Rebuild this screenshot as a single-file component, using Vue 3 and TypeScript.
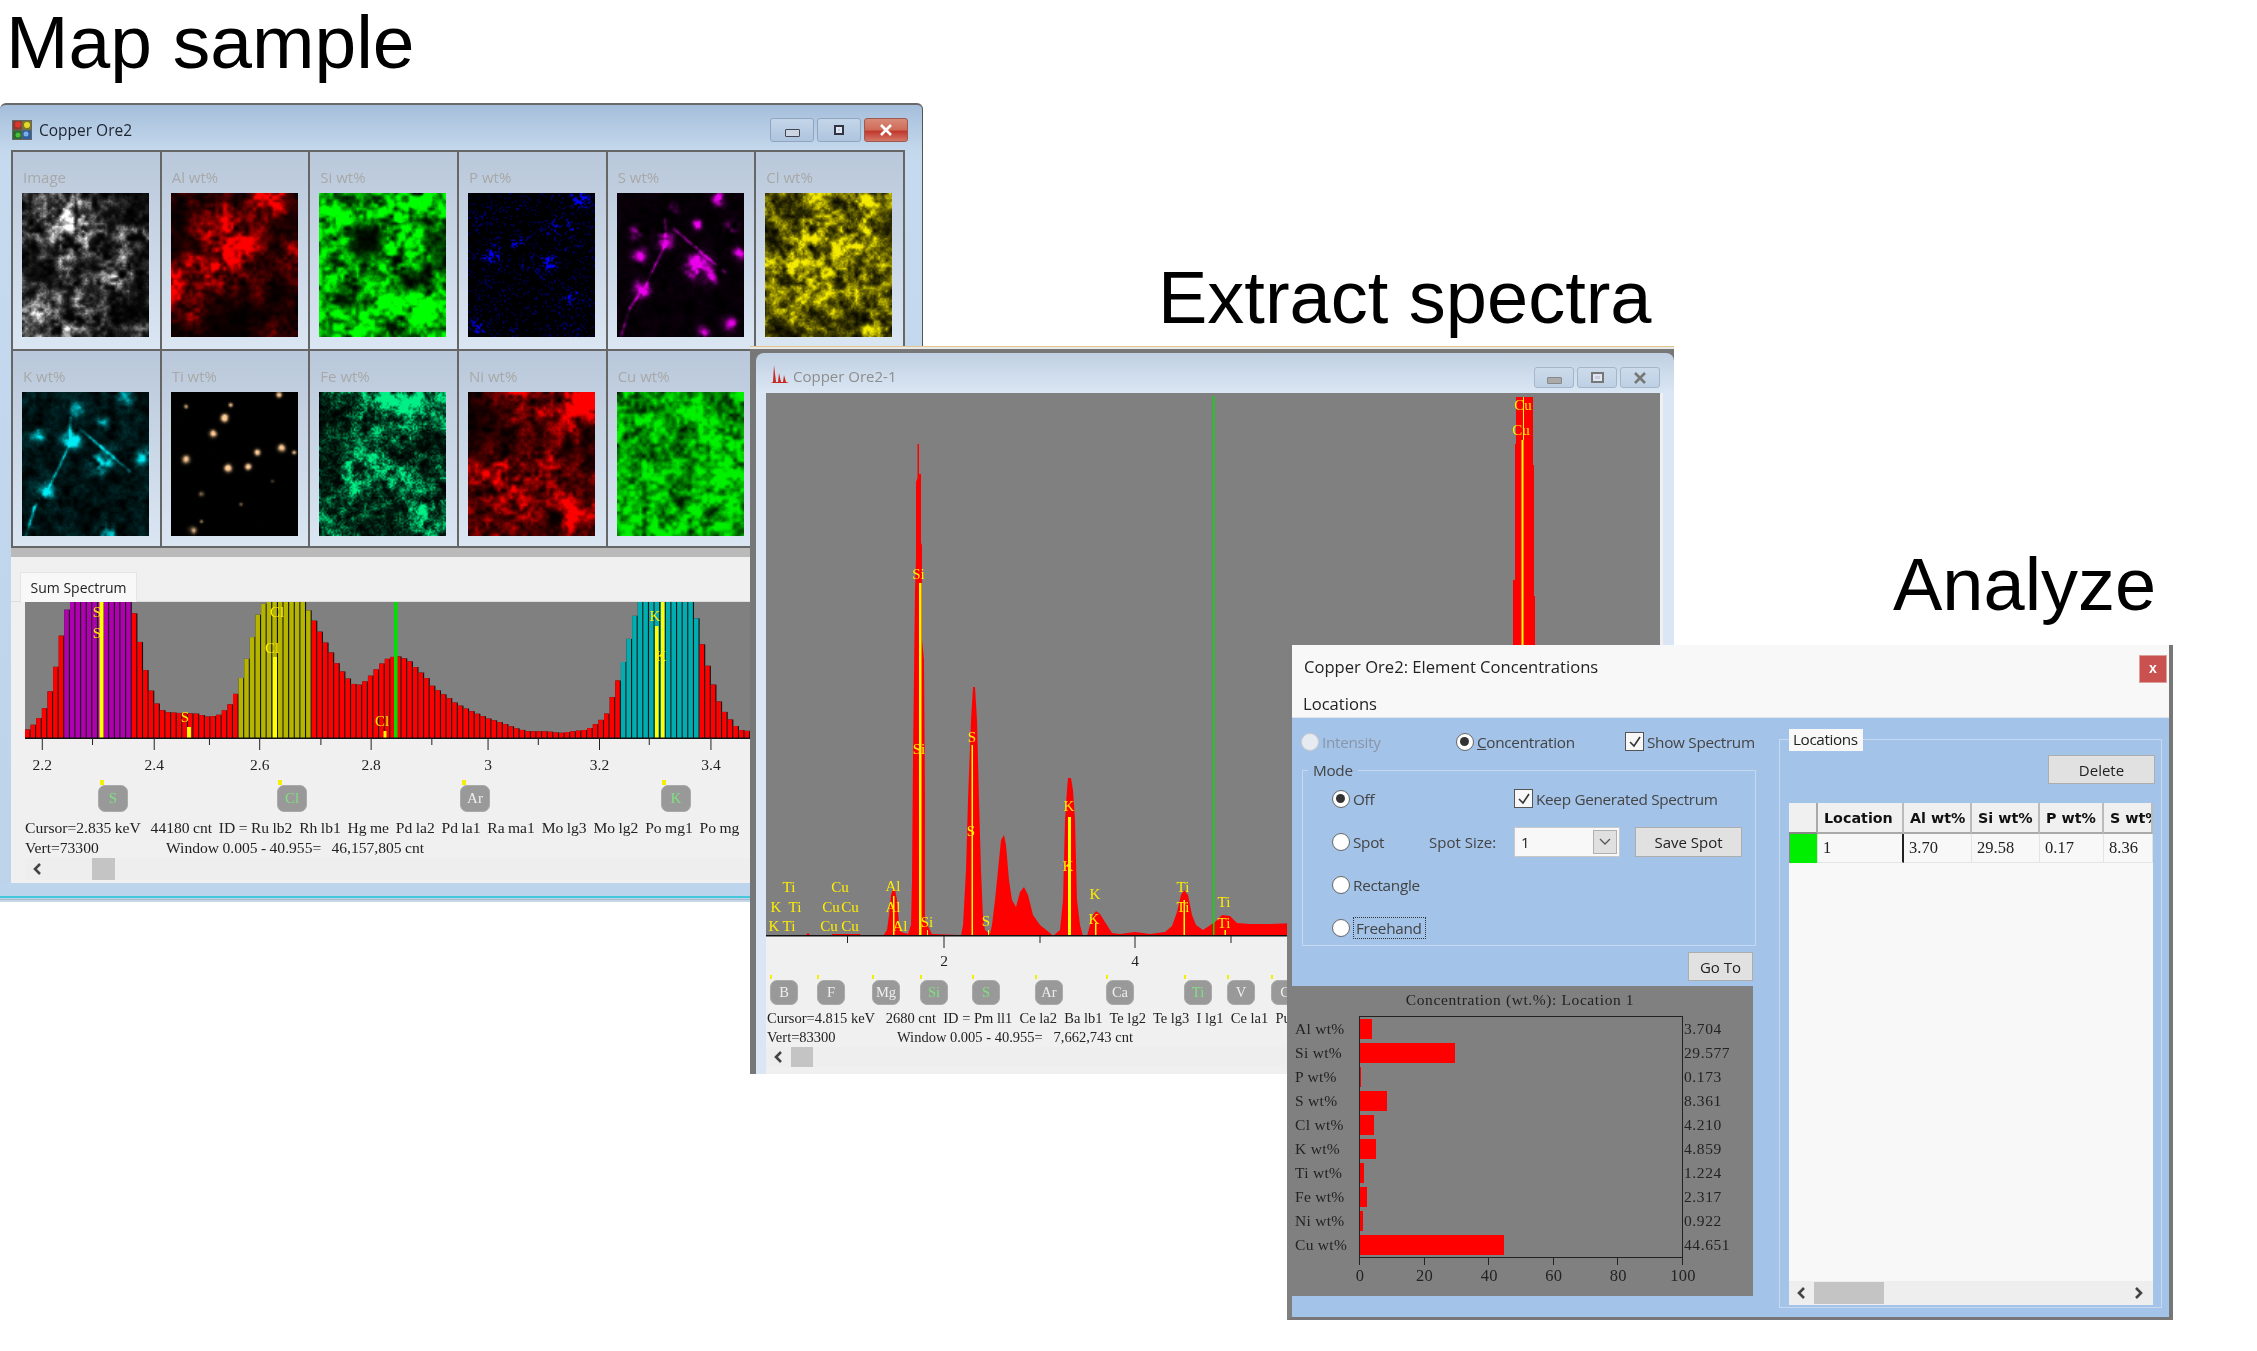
<script setup lang="ts">
import { onMounted } from 'vue'

type Blob3 = [number, number, number, number]
interface MapCfg {
  label: string
  color: [number, number, number]
  grid?: string[]
  blobs?: Blob3[]
  lines?: number[][]
  base: number
  mid: number
  fine: number
  gamma: number
  seed: number
}

const veins = [
  [0.38, 0.18, 0.38, 0.36, 0.22, 0.65, 0.1, 0.8, 0.03, 1],
  [0.45, 0.25, 0.62, 0.38, 0.85, 0.55],
]

const maps: MapCfg[] = [
  { label: 'Image', color: [255, 255, 255], seed: 11, base: 0, mid: 1.3, fine: 0.2, gamma: 2,
    grid: ['34453322', '34675323', '45785354', '24654352', '23443643', '32343742', '34443332', '55444312', '44544334'] },
  { label: 'Al wt%', color: [255, 0, 0], seed: 23, base: 0, mid: 1.1, fine: 0.14, gamma: 1.6,
    grid: ['23332793', '14585472', '24786423', '13588525', '57896237', '76473423', '75323312', '47211122', '23111243'] },
  { label: 'Si wt%', color: [0, 255, 0], seed: 37, base: 0, mid: 1.2, fine: 0.16, gamma: 1.45,
    grid: ['66678796', '77678958', '76117753', '77118763', '87677873', '77657117', '71677697', '67778897', '58777767'] },
  { label: 'P wt%', color: [0, 0, 255], seed: 41, base: 0.16, mid: 0.7, fine: 0.95, gamma: 1.9,
    blobs: [[0.2, 0.43, 0.06, 0.7], [0.63, 0.48, 0.06, 0.8], [0.39, 0.34, 0.04, 0.6], [0.82, 0.73, 0.05, 0.6], [0.89, 0.05, 0.06, 0.7], [0.67, 0.23, 0.04, 0.5], [0.82, 0.23, 0.04, 0.5], [0.08, 0.93, 0.05, 0.6]] },
  { label: 'S wt%', color: [235, 0, 235], seed: 53, base: 0.05, mid: 1.5, fine: 0.2, gamma: 1.25, lines: veins,
    blobs: [[0.8, 0.04, 0.05, 0.9], [0.45, 0.1, 0.035, 0.6], [0.37, 0.33, 0.06, 0.95], [0.14, 0.28, 0.045, 0.8], [0.18, 0.44, 0.05, 0.9], [0.63, 0.51, 0.08, 1.2], [0.75, 0.58, 0.05, 0.9], [0.63, 0.22, 0.035, 0.7], [0.9, 0.24, 0.05, 0.8], [0.2, 0.67, 0.06, 0.9], [0.9, 0.9, 0.05, 0.7], [0.68, 0.98, 0.05, 0.8], [0.96, 0.42, 0.045, 0.7]] },
  { label: 'Cl wt%', color: [245, 235, 0], seed: 67, base: 0, mid: 1, fine: 0.22, gamma: 1.8,
    grid: ['54675676', '56666565', '45767674', '55777784', '67777665', '67676555', '56665655', '56555556', '44655565'] },
  { label: 'K wt%', color: [0, 235, 245], seed: 71, base: 0.13, mid: 1.4, fine: 0.22, gamma: 1.25, lines: veins,
    blobs: [[0.39, 0.33, 0.06, 0.9], [0.63, 0.49, 0.07, 1], [0.2, 0.7, 0.06, 0.7], [0.13, 0.3, 0.05, 0.7], [0.8, 0.04, 0.06, 0.6], [0.43, 0.12, 0.05, 0.5], [0.68, 0.98, 0.06, 0.7], [0.95, 0.45, 0.06, 0.8], [0.65, 0.22, 0.045, 0.5]] },
  { label: 'Ti wt%', color: [255, 205, 150], seed: 83, base: 0, mid: 0.9, fine: 0.06, gamma: 1,
    blobs: [[0.42, 0.18, 0.026, 1.4], [0.85, 0.02, 0.02, 0.9], [0.33, 0.29, 0.026, 1.2], [0.87, 0.39, 0.026, 1.2], [0.12, 0.47, 0.026, 1.2], [0.45, 0.53, 0.026, 1.4], [0.68, 0.42, 0.022, 1], [0.61, 0.52, 0.022, 1], [0.24, 0.71, 0.018, 0.8], [0.17, 0.96, 0.026, 1.2], [0.12, 0.1, 0.015, 0.8], [0.47, 0.09, 0.015, 0.8], [0.97, 0.42, 0.015, 0.8], [0.24, 0.9, 0.012, 0.7], [0.55, 0.78, 0.012, 0.6], [0.8, 0.62, 0.012, 0.6]] },
  { label: 'Fe wt%', color: [0, 240, 135], seed: 97, base: 0, mid: 1.1, fine: 0.5, gamma: 2,
    grid: ['44599985', '34567775', '34454544', '34565443', '35786644', '35876545', '34654566', '56443485', '54332376'] },
  { label: 'Ni wt%', color: [255, 0, 0], seed: 101, base: 0, mid: 1.1, fine: 0.18, gamma: 1.6,
    grid: ['23565699', '22445577', '23343453', '23344433', '56655543', '57876544', '45765553', '44655597', '45443363'] },
  { label: 'Cu wt%', color: [0, 240, 0], seed: 113, base: 0, mid: 1, fine: 0.12, gamma: 1.25,
    grid: ['77778878', '88777767', '87666877', '65767777', '77676678', '88676777', '87777866', '77777766', '77877675'] },
]

const canvases: (HTMLCanvasElement | null)[] = []
function setCanvas(el: unknown, i: number) {
  canvases[i] = el as HTMLCanvasElement | null
}

function rng(seed: number) {
  let s = seed * 2654435761 >>> 0
  return () => {
    s = (s + 0x6d2b79f5) >>> 0
    let t = s
    t = Math.imul(t ^ (t >>> 15), t | 1)
    t ^= t + Math.imul(t ^ (t >>> 7), t | 61)
    return ((t ^ (t >>> 14)) >>> 0) / 4294967296
  }
}

function segDist(px: number, py: number, ax: number, ay: number, bx: number, by: number) {
  const k = 1.134
  const dx = bx - ax
  const dy = (by - ay) * k
  const qx = px - ax
  const qy = (py - ay) * k
  const t = Math.max(0, Math.min(1, (qx * dx + qy * dy) / (dx * dx + dy * dy || 1)))
  return Math.hypot(qx - t * dx, qy - t * dy)
}

function makeOctave(r: () => number, W: number, H: number, cell: number) {
  const gw = Math.ceil(W / cell) + 2
  const gh = Math.ceil(H / cell) + 2
  const data = Array.from({ length: gw * gh }, () => r())
  return (x: number, y: number) => {
    const cx = x / cell
    const cy = y / cell
    const ix = Math.floor(cx)
    const iy = Math.floor(cy)
    const ax = cx - ix
    const ay = cy - iy
    const q = (a: number, b: number) => data[a * gw + b]
    return (q(iy, ix) * (1 - ax) + q(iy, ix + 1) * ax) * (1 - ay) + (q(iy + 1, ix) * (1 - ax) + q(iy + 1, ix + 1) * ax) * ay
  }
}

function draw(c: HTMLCanvasElement, m: MapCfg) {
  const W = 84
  const H = 96
  c.width = W
  c.height = H
  const ctx = c.getContext('2d')
  if (!ctx) return
  const r = rng(m.seed)
  const oct1 = makeOctave(r, W, H, 6)
  const oct2 = makeOctave(r, W, H, 2.5)
  const img = ctx.createImageData(W, H)
  for (let y = 0; y < H; y++) {
    for (let x = 0; x < W; x++) {
      const u = (x + 0.5) / W
      const v = (y + 0.5) / H
      let val = m.base
      if (m.grid) {
        const rows = m.grid.length
        const cols = m.grid[0].length
        const fx = Math.min(cols - 1.001, Math.max(0, u * cols - 0.5))
        const fy = Math.min(rows - 1.001, Math.max(0, v * rows - 0.5))
        const ix = Math.floor(fx)
        const iy = Math.floor(fy)
        const ax = fx - ix
        const ay = fy - iy
        const g = (a: number, b: number) => Number(m.grid![a][b]) / 9
        val += (g(iy, ix) * (1 - ax) + g(iy, ix + 1) * ax) * (1 - ay) + (g(iy + 1, ix) * (1 - ax) + g(iy + 1, ix + 1) * ax) * ay
      }
      for (const b of m.blobs || []) {
        const d2 = (u - b[0]) ** 2 + ((v - b[1]) * 1.134) ** 2
        val += b[3] * Math.exp(-d2 / (b[2] * b[2]))
      }
      for (const l of m.lines || []) {
        for (let i = 0; i + 3 < l.length; i += 2) {
          const d = segDist(u, v, l[i], l[i + 1], l[i + 2], l[i + 3])
          val += 0.45 * Math.exp(-(d * d) / 0.00012)
        }
      }
      const tex = 0.55 * oct1(x, y) + 0.45 * oct2(x, y)
      val *= Math.max(0, 1 - m.mid / 2 + m.mid * (tex - 0.5) * 2 + m.mid / 2)
      val += (r() - 0.5) * m.fine * Math.min(1, val * 1.6 + 0.1)
      if (m.label === 'P wt%') val = r() < val * 0.75 ? 0.35 + val : 0
      val = Math.pow(Math.max(0, Math.min(1, val)), m.gamma)
      const i = (y * W + x) * 4
      img.data[i] = m.color[0] * val
      img.data[i + 1] = m.color[1] * val
      img.data[i + 2] = m.color[2] * val
      img.data[i + 3] = 255
    }
  }
  ctx.putImageData(img, 0, 0)
}

onMounted(() => {
  maps.forEach((m, i) => {
    const c = canvases[i]
    if (c) draw(c, m)
  })
})

// Sum spectrum: key points as (x, top), in the window's own pixels
const keyRaw: number[] = [50,545,62,532,73,515,85,490,96,450,107,385,118,303,129,200,140,157,262,157,274,210,285,315,296,385,307,440,318,470,330,487,362,490,395,492,420,502,440,495,458,473,470,445,480,405,490,360,500,303,510,245,520,185,532,157,610,157,620,182,632,215,644,250,655,282,667,313,678,345,690,370,702,392,712,405,725,405,737,390,748,372,760,352,770,337,782,323,800,320,820,330,830,345,843,365,855,380,866,405,878,420,890,433,902,445,915,460,938,478,960,493,982,507,1010,520,1035,535,1060,545,1100,545,1125,550,1150,545,1180,540,1205,515,1220,490,1235,420,1248,365,1260,295,1272,215,1284,157,1393,157,1405,245,1417,323,1430,385,1440,440,1452,478,1465,505,1485,540,1508,545,1540,550]
function topAt(zx: number) {
  for (let i = 0; i + 3 < keyRaw.length; i += 2) {
    if (zx >= keyRaw[i] && zx <= keyRaw[i + 2]) {
      const t = (zx - keyRaw[i]) / (keyRaw[i + 2] - keyRaw[i])
      return keyRaw[i + 1] + t * (keyRaw[i + 3] - keyRaw[i + 1])
    }
  }
  return 550
}
const sumBars = Array.from({ length: 132 }, (_, i) => {
  const zx = 50 + i * 11.3
  const top = topAt(zx + 5)
  let fill = '#ff0000'
  if (zx >= 128 && zx < 262) fill = '#b000b0'
  else if (zx >= 474 && zx < 619) fill = '#b5b500'
  else if (zx >= 1247 && zx < 1405) fill = '#00adb0'
  return { x: (zx - 50) / 2.01, y: (top - 157) / 3, h: (565 - top) / 3, fill }
})
const sumLabels = [
  { t: 'S', x: 72, y: 15 }, { t: 'S', x: 72, y: 36 }, { t: 'S', x: 160, y: 120 },
  { t: 'Cl', x: 252, y: 15 }, { t: 'Cl', x: 247, y: 51 }, { t: 'Cl', x: 357, y: 124 },
  { t: 'K', x: 630, y: 19 }, { t: 'K', x: 636, y: 59 },
]
const sumYellow = [
  { x: 74.5, y: 0, w: 4, h: 136 }, { x: 248, y: 55, w: 4, h: 81 }, { x: 162, y: 125, w: 4, h: 11 }, { x: 358.5, y: 129, w: 3, h: 7 },
  { x: 630, y: 24, w: 3.5, h: 112 }, { x: 636, y: 0, w: 3.5, h: 136 },
]
const sumTicks = [
  { x: 85, l: '2.2' }, { x: 186 }, { x: 310, l: '2.4' }, { x: 421 }, { x: 522, l: '2.6' }, { x: 645 }, { x: 746, l: '2.8' }, { x: 868 }, { x: 981, l: '3' }, { x: 1082 }, { x: 1205, l: '3.2' }, { x: 1305 }, { x: 1429, l: '3.4' },
].map((t) => ({ x: t.x / 2.01 - 25, l: t.l }))
const sumEls = [
  { t: 'S', x: 73, on: true, mx: 75 }, { t: 'Cl', x: 252, on: true, mx: 253 }, { t: 'Ar', x: 435, on: false, mx: 437 }, { t: 'K', x: 636, on: true, mx: 637 },
]
const sumLine1 = 'Cursor=2.835 keV   44180 cnt  ID = Ru lb2  Rh lb1  Hg me  Pd la2  Pd la1  Ra ma1  Mo lg3  Mo lg2  Po mg1  Po mg'
const sumLine2 = 'Window 0.005 - 40.955=   46,157,805 cnt'
const specLine1 = 'Cursor=4.815 keV   2680 cnt  ID = Pm ll1  Ce la2  Ba lb1  Te lg2  Te lg3  I lg1  Ce la1  Pu'
const specLine2 = 'Window 0.005 - 40.955=   7,662,743 cnt'

// Full spectrum outline, page pixels
const specRaw: number[] = [766,936,805,936,808,933,811,936,832,936,832,934,860,934,861,936,883,936,887,930,889,915,891,895,893,889,895,889,897,900,899,925,901,932,908,934,911,925,912,880,913,760,915,590,916,558,916,482,917.5,478,917.5,444,919,444,919,474,921,474,921,543,922,545,922,640,924,660,925,800,925,920,932,934,960,935,961,936,963,925,966,870,968,800,971,720,973,687,975,687,977,720,979,800,981,870,983,918,985,930,990,934,992,925,995,900,998,870,1001,840,1004,835,1006,845,1009,880,1012,900,1016,907,1020,892,1024,887,1028,895,1033,915,1040,925,1050,933,1053,936,1060,930,1063,900,1065,820,1067,790,1068,778,1071,778,1073,790,1075,820,1077,900,1080,925,1083,936,1087,936,1090,925,1093,915,1096,911,1100,914,1105,922,1112,933,1120,934,1135,932,1150,934,1165,932,1172,926,1177,912,1181,895,1184,890,1188,895,1192,915,1196,925,1203,930,1215,922,1222,915,1230,916,1237,923,1250,924,1270,924,1295,923,1295,936]
const specPoints = specRaw.reduce<string[]>((acc, v, i) => {
  if (i % 2 === 0) acc.push(`${v - 766},${specRaw[i + 1] - 393}`)
  return acc
}, []).join(' ')
const cuPoints = [[1513,700],[1513,580],[1515,580],[1515,444],[1516,444],[1516,397],[1533,397],[1533,465],[1534,465],[1534,596],[1535,596],[1535,700]].map((p) => `${p[0] - 766},${p[1] - 393}`).join(' ')
const specYellow = [
  { x: 919, y: 583, w: 2.5, h: 353 }, { x: 971.5, y: 745, w: 1.5, h: 191 }, { x: 893, y: 896, w: 1.5, h: 40 }, { x: 927, y: 930, w: 1, h: 6 }, { x: 988, y: 930, w: 1, h: 6 },
  { x: 1068, y: 817, w: 3, h: 119 }, { x: 1095, y: 923, w: 1.5, h: 13 }, { x: 1183.5, y: 900, w: 1.5, h: 36 }, { x: 1224.5, y: 930, w: 1.5, h: 6 }, { x: 1521.5, y: 440, w: 2, h: 210 }, { x: 1523, y: 397, w: 1, h: 43 },
].map((b) => ({ ...b, x: b.x - 766, y: b.y - 393 }))
const specLabels = [
  ['Ti',789,887],['K',776,907],['Ti',795,907],['K',774,926],['Ti',789,926],['Cu',840,887],['Cu',831,907],['Cu',850,907],['Cu',829,926],['Cu',850,926],
  ['Al',893,886],['Al',893,907],['Al',900,926],['Si',927,922],['Si',918.5,574],['Si',919,749],['S',972,737],['S',971,831],['S',986,921],
  ['K',1069,806],['K',1068,866],['K',1095,894],['K',1094,919],['Ti',1183,887],['Ti',1183,907],['Ti',1224,902],['Ti',1224,923],['Cu',1523,405],['Cu',1521,430],
].map((l) => ({ t: l[0] as string, x: (l[1] as number) - 766, y: (l[2] as number) - 393 }))
const specTicks = [
  { x: 847.5 }, { x: 944, l: '2' }, { x: 1040 }, { x: 1135, l: '4' }, { x: 1231 },
].map((t) => ({ x: t.x - 766, l: t.l }))
const specEls = [
  { t: 'B', x: 4, on: false }, { t: 'F', x: 51, on: false }, { t: 'Mg', x: 106, on: false }, { t: 'Si', x: 154, on: true }, { t: 'S', x: 206, on: true }, { t: 'Ar', x: 269, on: false }, { t: 'Ca', x: 340, on: false }, { t: 'Ti', x: 418, on: true }, { t: 'V', x: 461, on: false }, { t: 'C', x: 505, on: false },
]

const conc = [
  { l: 'Al wt%', v: 3.704, s: '3.704' }, { l: 'Si wt%', v: 29.577, s: '29.577' }, { l: 'P wt%', v: 0.173, s: '0.173' }, { l: 'S wt%', v: 8.361, s: '8.361' }, { l: 'Cl wt%', v: 4.21, s: '4.210' },
  { l: 'K wt%', v: 4.859, s: '4.859' }, { l: 'Ti wt%', v: 1.224, s: '1.224' }, { l: 'Fe wt%', v: 2.317, s: '2.317' }, { l: 'Ni wt%', v: 0.922, s: '0.922' }, { l: 'Cu wt%', v: 44.651, s: '44.651' },
]
const axisTicks = [0, 20, 40, 60, 80, 100]
const tableHead = ['Location', 'Al wt%', 'Si wt%', 'P wt%', 'S wt%']
const tableRow = ['1', '3.70', '29.58', '0.17', '8.36']
</script>

<template>
  <div class="stage">
    <h1 class="heading h-map">Map sample</h1>

    <section class="win win-map">
      <header class="map-title">
        <svg class="quilt" viewBox="0 0 20 20" width="20" height="20">
          <rect width="20" height="20" fill="#666" />
          <rect x="1" y="1" width="8.5" height="8.5" fill="#8a3a2c" />
          <circle cx="6" cy="4.5" r="3" fill="#e0352c" />
          <rect x="10.5" y="1" width="8.5" height="8.5" fill="#7a7a20" />
          <circle cx="15" cy="5" r="3" fill="#e8d82a" />
          <rect x="1" y="10.5" width="8.5" height="8.5" fill="#2a6a2a" />
          <circle cx="6" cy="15" r="2.5" fill="#46c03a" />
          <rect x="10.5" y="10.5" width="8.5" height="8.5" fill="#2f5f9c" />
          <circle cx="14" cy="14" r="2.5" fill="#7ab0e8" />
        </svg>
        <span class="map-title-text">Copper Ore2</span>
        <div class="caption-btns">
          <span class="cap cap-min"><i class="glyph-min"></i></span>
          <span class="cap cap-max"><i class="glyph-max"></i></span>
          <span class="cap cap-close">
            <svg viewBox="0 0 14 12" width="14" height="12"><path d="M2 1 L12 11 M12 1 L2 11" stroke="#fff" stroke-width="2.6" /></svg>
          </span>
        </div>
      </header>

      <div class="map-grid">
        <div v-for="(m, i) in maps" :key="m.label" class="map-cell">
          <div class="map-label">{{ m.label }}</div>
          <canvas :ref="(el) => setCanvas(el, i)" class="map-canvas"></canvas>
        </div>
        <div class="map-cell"></div>
      </div>

      <div class="map-lower">
        <div class="grey-bar"></div>
        <div class="tab-row"><span class="tab">Sum Spectrum</span></div>
        <svg class="sum-svg" width="880" height="173" viewBox="0 0 880 173">
          <rect width="880" height="136" fill="#808080" />
          <template v-for="(b, i) in sumBars" :key="i">
            <rect :x="b.x" :y="b.y" width="5.62" :height="b.h" fill="#111" />
            <rect :x="b.x" :y="b.y" width="4.5" :height="b.h" :fill="b.fill" />
          </template>
          <rect v-for="(y, i) in sumYellow" :key="'y' + i" :x="y.x" :y="y.y" :width="y.w" :height="y.h" fill="#ffff00" />
          <rect x="369" y="0" width="3.5" height="136" fill="#00e000" />
          <text v-for="(l, i) in sumLabels" :key="'l' + i" :x="l.x" :y="l.y" class="peak-label" text-anchor="middle">{{ l.t }}</text>
          <rect x="0" y="135.5" width="880" height="1.5" fill="#111" />
          <template v-for="(t, i) in sumTicks" :key="'t' + i">
            <line :x1="t.x" :x2="t.x" y1="136" :y2="t.l ? 148 : 143" stroke="#222" stroke-width="1" />
            <text v-if="t.l" :x="t.x" y="168" class="axis-label" text-anchor="middle">{{ t.l }}</text>
          </template>
        </svg>
        <div class="el-strip sum-strip">
          <template v-for="e in sumEls" :key="e.t">
            <i class="el-mark sum-mark" :style="{ left: e.mx + 'px' }"></i>
            <span class="el-btn sum-btn" :class="{ on: e.on }" :style="{ left: e.x + 'px' }">{{ e.t }}</span>
          </template>
        </div>
        <div class="status sum-status">
          <div>{{ sumLine1 }}</div>
          <div><span class="vert sum-vert">Vert=73300</span>{{ sumLine2 }}</div>
        </div>
        <div class="scroll sum-scroll">
          <svg class="chev" viewBox="0 0 10 14" width="10" height="14"><path d="M8 2 L3 7 L8 12" fill="none" stroke="#444" stroke-width="2.6" /></svg>
          <span class="thumb sum-thumb"></span>
        </div>
      </div>
      <div class="map-foot"></div>
    </section>

    <h1 class="heading h-extract">Extract spectra</h1>

    <section class="win win-spec">
      <div class="spec-frame">
        <header class="spec-title">
          <svg class="peak-icon" viewBox="0 0 18 20" width="18" height="20">
            <path d="M0 19 L2 18 L3 1 L5 18 L7 18 L8 9 L10 18 L12 18 L13 11 L15 18 L18 19 Z" fill="#c8281e" />
          </svg>
          <span class="spec-title-text">Copper Ore2-1</span>
          <div class="spec-caps">
            <span class="cap2 cap2-wide"><i class="glyph-min2"></i></span>
            <span class="cap2 cap2-wide"><i class="glyph-max2"></i></span>
            <span class="cap2 cap2-wide">
              <svg viewBox="0 0 14 12" width="14" height="12"><path d="M2 1 L12 11 M12 1 L2 11" stroke="#777" stroke-width="2.6" /></svg>
            </span>
          </div>
        </header>
        <div class="spec-body">
          <svg class="spec-svg" width="894" height="582" viewBox="0 0 894 582">
            <rect width="894" height="543" fill="#808080" />
            <polygon :points="specPoints" fill="#ff0000" />
            <polygon :points="cuPoints" fill="#ff0000" />
            <rect x="447" y="3" width="1.5" height="540" fill="#00e000" />
            <rect v-for="(y, i) in specYellow" :key="'sy' + i" :x="y.x" :y="y.y" :width="y.w" :height="y.h" fill="#ffff00" />
            <text v-for="(l, i) in specLabels" :key="'sl' + i" :x="l.x" :y="l.y + 5" class="peak-label small" text-anchor="middle">{{ l.t }}</text>
            <rect x="0" y="542" width="894" height="1.5" fill="#111" />
            <template v-for="(t, i) in specTicks" :key="'st' + i">
              <line :x1="t.x" :x2="t.x" y1="543" :y2="t.l ? 555 : 550" stroke="#222" stroke-width="1" />
              <text v-if="t.l" :x="t.x" y="573" class="axis-label" text-anchor="middle">{{ t.l }}</text>
            </template>
          </svg>
          <div class="el-strip spec-strip">
            <template v-for="e in specEls" :key="e.t">
              <i class="el-mark spec-mark" :style="{ left: e.x + 'px' }"></i>
              <span class="el-btn spec-btn" :class="{ on: e.on }" :style="{ left: e.x + 'px' }">{{ e.t }}</span>
            </template>
          </div>
          <div class="status spec-status">
            <div>{{ specLine1 }}</div>
            <div><span class="vert spec-vert">Vert=83300</span>{{ specLine2 }}</div>
          </div>
          <div class="scroll spec-scroll">
            <svg class="chev" viewBox="0 0 10 14" width="10" height="14"><path d="M8 2 L3 7 L8 12" fill="none" stroke="#444" stroke-width="2.6" /></svg>
            <span class="thumb spec-thumb"></span>
          </div>
        </div>
      </div>
    </section>

    <h1 class="heading h-analyze">Analyze</h1>

    <section class="win win-conc">
      <header class="conc-head">
        <div class="conc-title">Copper Ore2: Element Concentrations</div>
        <div class="conc-menu">Locations</div>
        <span class="conc-close">x</span>
      </header>
      <div class="conc-body">
        <div class="conc-left">
          <div class="top-row">
            <label class="opt disabled"><i class="radio"></i>Intensity</label>
            <label class="opt"><i class="radio sel"></i><span><u>C</u>oncentration</span></label>
            <label class="opt"><i class="check"><svg viewBox="0 0 16 16" width="16" height="16"><path d="M3 8 L7 12 L13 3" fill="none" stroke="#333" stroke-width="1.6" /></svg></i>Show Spectrum</label>
          </div>
          <div class="mode-box">
            <span class="legend mode-legend">Mode</span>
            <label class="opt"><i class="radio sel"></i>Off</label>
            <span></span>
            <label class="opt keep"><i class="check"><svg viewBox="0 0 16 16" width="16" height="16"><path d="M3 8 L7 12 L13 3" fill="none" stroke="#333" stroke-width="1.6" /></svg></i>Keep Generated Spectrum</label>

            <label class="opt"><i class="radio"></i>Spot</label>
            <span class="opt spot-size">Spot Size:</span>
            <div class="select">
              <span>1</span>
              <i class="sel-btn"><svg viewBox="0 0 12 8" width="12" height="8"><path d="M1 1 L6 6 L11 1" fill="none" stroke="#555" stroke-width="1.3" /></svg></i>
            </div>
            <button class="btn save" type="button">Save Spot</button>

            <label class="opt full"><i class="radio"></i>Rectangle</label>
            <label class="opt full"><i class="radio"></i><span class="focus">Freehand</span></label>
          </div>
          <div class="goto-row"><button class="btn goto" type="button">Go To</button></div>
          <div class="conc-chart">
            <div class="chart-title">Concentration (wt.%): Location 1</div>
            <div class="chart-main">
              <div class="chart-col labels">
                <div v-for="c in conc" :key="c.l" class="chart-row">{{ c.l }}</div>
              </div>
              <div class="plot-wrap">
                <div class="plot">
                  <div v-for="c in conc" :key="c.l" class="chart-row">
                    <i class="bar" :style="{ width: c.v + '%' }"></i>
                  </div>
                </div>
                <div class="axis">
                  <span v-for="t in axisTicks" :key="t" class="axis-tick"><b>{{ t }}</b></span>
                </div>
              </div>
              <div class="chart-col values">
                <div v-for="c in conc" :key="c.l" class="chart-row">{{ c.s }}</div>
              </div>
            </div>
          </div>
        </div>
        <div class="conc-right">
          <span class="legend loc-legend">Locations</span>
          <div class="del-row"><button class="btn delete" type="button">Delete</button></div>
          <div class="table">
            <div class="t-grid">
              <div class="t-corner"></div>
              <div v-for="h in tableHead" :key="h" class="t-head">{{ h }}</div>
              <div class="t-green"></div>
              <div v-for="(c, i) in tableRow" :key="i" class="t-cell" :class="{ first: i === 0 }">{{ c }}</div>
            </div>
            <div class="scroll loc-scroll">
              <svg class="chev" viewBox="0 0 10 14" width="10" height="14"><path d="M8 2 L3 7 L8 12" fill="none" stroke="#444" stroke-width="2.6" /></svg>
              <span class="thumb loc-thumb"></span>
              <svg class="chev right" viewBox="0 0 10 14" width="10" height="14"><path d="M2 2 L7 7 L2 12" fill="none" stroke="#444" stroke-width="2.6" /></svg>
            </div>
          </div>
        </div>
      </div>
    </section>
  </div>
</template>

<style scoped>
.stage {
  position: relative;
  width: 2257px;
  height: 1351px;
  background: #fff;
  overflow: hidden;
  font-family: "Open Sans", "Liberation Sans", sans-serif;
  color: #222;
}
.heading {
  position: absolute;
  margin: 0;
  font: 400 74px/1.12 "Liberation Sans", Arial, sans-serif;
  color: #000;
  white-space: nowrap;
}
.h-map { left: 6px; top: 0; font-size: 75px; }
.h-extract { left: 1158px; top: 257px; }
.h-analyze { left: 1893px; top: 544px; }
.win { position: absolute; box-sizing: border-box; filter: blur(0.35px); }

/* Map window */
.win-map {
  left: 0;
  top: 103px;
  width: 923px;
  height: 799px;
  border-top: 2px solid #6a6a6a;
  border-right: 1px solid #555;
  border-radius: 6px 6px 0 0;
  background: linear-gradient(#a5bedb, #c4d8ec 45px, #c6daef 60px, #bcd3ea);
  overflow: hidden;
}
.map-title { height: 45px; box-sizing: border-box; display: flex; align-items: center; padding: 4px 14px 0 12px; }
.map-title-text { margin-left: 7px; font-size: 15.5px; color: #1c2430; }
.quilt { flex: none; }
.caption-btns { margin-left: auto; display: flex; gap: 3px; }
.cap { width: 44px; height: 24px; box-sizing: border-box; border: 1px solid #8fa6c0; border-radius: 3px; background: linear-gradient(#c4d5e8, #aec5de); display: flex; align-items: center; justify-content: center; }
.cap-close { background: linear-gradient(#d98a78 0%, #cf6a58 50%, #c0362c 55%, #d47868 100%); border-color: #9a5a50; }
.glyph-min { width: 13px; height: 6px; border: 1px solid #445; background: #ccd6e2; border-radius: 1px; margin-top: 6px; }
.glyph-max { width: 10px; height: 10px; border: 2px solid #334; background: #b6cde6; box-sizing: border-box; box-shadow: inset 0 0 0 2px #dfe8f2; }
.map-grid {
  margin-left: 11px;
  width: 894px;
  display: grid;
  grid-template-columns: repeat(6, 1fr);
  grid-template-rows: 197px 195px;
  gap: 2px;
  background: #666;
  box-sizing: border-box;
  border: 2px solid #666;
}
.map-cell { background: linear-gradient(#b9c8da, #dbe6f3); padding: 41px 0 0 9px; position: relative; box-sizing: border-box; }
.map-label { position: absolute; left: 10px; top: 15px; font-size: 15px; color: #a8a8a8; }
.map-canvas { display: block; width: 127px; height: 144px; background: #000; }
.map-lower { margin-left: 11px; width: 894px; height: 335px; background: #f0f0f0; display: flex; flex-direction: column; overflow: hidden; }
.grey-bar { height: 9px; background: #bababa; flex: none; }
.tab-row { height: 45px; flex: none; padding: 15px 0 0 9px; box-sizing: border-box; border-bottom: 1px solid #ddd; }
.tab { display: inline-flex; align-items: center; justify-content: center; box-sizing: border-box; width: 117px; height: 30px; background: #f8f8f8; border: 1px solid #e4e4e4; border-bottom: 0; font-size: 14px; color: #222; }
.sum-svg { display: block; margin-left: 14px; flex: none; }
.peak-label { font: 15px "Liberation Serif", serif; fill: #ffee00; }
.peak-label.small { font-size: 15px; }
.axis-label { font: 15.5px "Liberation Serif", serif; fill: #222; }
.el-strip { position: relative; flex: none; }
.sum-strip { height: 37px; margin-left: 14px; }
.el-mark { position: absolute; top: 5px; width: 4px; height: 5px; background: #f5f000; }
.el-btn { position: absolute; box-sizing: border-box; display: flex; align-items: center; justify-content: center; background: #999; border: 1px solid #aaa; border-radius: 7px; font: 15px "Liberation Serif", serif; color: #eee; }
.el-btn.on { color: #7fe07f; }
.sum-btn { top: 10px; width: 30px; height: 27px; }
.status { flex: none; font-family: "Liberation Serif", serif; white-space: pre; color: #222; overflow: hidden; }
.vert { display: inline-block; }
.sum-status { margin: 6px 0 0 14px; font-size: 15.6px; line-height: 20px; height: 40px; width: 725px; word-spacing: -0.5px; }
.sum-vert { width: 141px; }
.scroll { position: relative; flex: none; background: #eee; display: flex; align-items: center; }
.chev { flex: none; }
.thumb { display: block; background: #c4c4c4; }
.sum-scroll { margin-left: 14px; height: 22px; padding-left: 7px; }
.sum-thumb { width: 23px; height: 22px; margin-left: 50px; }
.map-foot { height: 19px; background: linear-gradient(#bcd4ec 0 13px, #45c8dc 13px 15px, #bcd4ec 15px 16px, #a9b9c9 16px 17px, #c4d6e8 17px); }

/* Spectrum window */
.win-spec {
  left: 750px;
  top: 346px;
  width: 924px;
  height: 728px;
  background: linear-gradient(#e8e8e8 0 2px, #777 2px);
  border-top: 1px solid #e2c68c;
  padding: 6px 0 0 6px;
}
.spec-frame { height: 100%; background: linear-gradient(#c0d0e2, #dae6f3 40px); border-radius: 8px 8px 0 0; overflow: hidden; display: flex; flex-direction: column; }
.spec-title { height: 40px; flex: none; display: flex; align-items: center; padding: 5px 14px 0 15px; box-sizing: border-box; }
.spec-title-text { margin-left: 4px; font-size: 15px; color: #8d8d8d; }
.peak-icon { flex: none; margin-top: -4px; }
.spec-caps { margin-left: auto; display: flex; gap: 3px; align-self: flex-start; margin-top: 9px; }
.cap2 { height: 21px; box-sizing: border-box; border: 1px solid #a3b6ca; border-radius: 3px; display: flex; align-items: center; justify-content: center; background: linear-gradient(#ccdbeb, #bed0e4); }
.cap2-wide { width: 40px; }
.glyph-min2 { width: 13px; height: 5px; background: #aaa; border: 1px solid #888; border-radius: 1px; margin-top: 5px; }
.glyph-max2 { width: 13px; height: 11px; box-sizing: border-box; border: 2px solid #777; background: #ccd; box-shadow: inset 0 0 0 2px #dfe8f2; }
.spec-body { margin-left: 10px; width: 897px; flex: 1; background: #f0f0f0; display: flex; flex-direction: column; border-right: 0; }
.spec-svg { display: block; flex: none; }
.spec-strip { height: 30px; }
.spec-btn { top: 5px; width: 28px; height: 25px; font-size: 14.5px; }
.spec-mark { top: 0; width: 1.5px; height: 4px; }
.spec-status { margin-top: 4px; font-size: 14.5px; line-height: 19px; height: 38px; width: 520px; padding-left: 1px; }
.spec-vert { width: 130px; }
.spec-scroll { height: 20px; padding-left: 7px; }
.spec-thumb { width: 22px; height: 20px; margin-left: 8px; }

/* Concentration window */
.win-conc {
  left: 1287px;
  top: 645px;
  width: 886px;
  height: 675px;
  border-left: 5px solid #7f7f7f;
  border-right: 4px solid #777;
  border-bottom: 3px solid #777;
  background: #a3c3e9;
  display: flex;
  flex-direction: column;
}
.conc-head { position: relative; height: 73px; flex: none; background: #f8f8f8; border-bottom: 1px solid #dde6f0; box-sizing: border-box; }
.conc-title { position: absolute; left: 12px; top: 10px; font-size: 16.6px; color: #222; white-space: nowrap; }
.conc-menu { position: absolute; left: 11px; top: 47px; font-size: 16.6px; color: #222; }
.conc-close { position: absolute; right: 2px; top: 10px; width: 28px; height: 28px; background: #c9514f; border: 1px solid #dca09a; box-sizing: border-box; color: #fff; font: 700 14px/24px "Liberation Sans", sans-serif; text-align: center; }
.conc-body { flex: 1; display: flex; gap: 26px; min-height: 0; }
.conc-left { width: 461px; flex: none; display: flex; flex-direction: column; }
.top-row { height: 52px; flex: none; display: grid; grid-template-columns: 155px 169px auto; align-items: center; padding: 0 0 5px 9px; box-sizing: border-box; }
.opt { display: flex; align-items: center; font-size: 15.3px; letter-spacing: -0.3px; color: #444; white-space: nowrap; }
.opt.disabled { color: #8a96a8; }
.radio { flex: none; width: 18px; height: 18px; box-sizing: border-box; margin-right: 3px; border-radius: 50%; background: #fff; border: 1.5px solid #666; position: relative; }
.disabled .radio { border-color: #ccc; background: #e6ebf2; }
.radio.sel::after { content: ""; position: absolute; left: 3px; top: 3px; width: 9px; height: 9px; border-radius: 50%; background: #333; }
.check { flex: none; width: 19px; height: 19px; box-sizing: border-box; border: 1.5px solid #555; background: #f8f8f8; margin-right: 3px; display: flex; align-items: center; justify-content: center; }
.mode-box {
  position: relative;
  margin-left: 10px;
  width: 454px;
  height: 176px;
  flex: none;
  box-sizing: border-box;
  border: 1.5px solid #c6d8ef;
  padding: 6px 0 0 29px;
  display: grid;
  grid-template-columns: 97px 85px 121px 107px;
  grid-template-rows: repeat(4, 43px);
  align-items: center;
}
.legend { position: absolute; background: #a3c3e9; font-size: 15.3px; letter-spacing: -0.3px; color: #444; padding: 0 5px; }
.mode-legend { left: 5px; top: -11px; }
.keep { grid-column: 3 / 5; }
.spot-size { color: #444; letter-spacing: 0; font-size: 15px; }
.full { grid-column: 1 / 5; }
.focus { border: 1px dotted #333; padding: 0 3px 0 2px; line-height: 20px; }
.select { width: 106px; height: 30px; box-sizing: border-box; background: #f8f8f8; border: 1.5px solid #c8c8c8; display: flex; align-items: center; justify-content: space-between; padding: 0 2px 0 6px; font-size: 15px; color: #222; }
.sel-btn { width: 24px; height: 24px; background: #e0e0e0; border: 1px solid #b0b0b0; box-sizing: border-box; display: flex; align-items: center; justify-content: center; }
.btn { padding: 0; box-sizing: border-box; background: #e1e1e1; border: 1.5px solid #adadad; font: 15px "Open Sans", sans-serif; color: #222; }
.save { width: 107px; height: 30px; }
.goto-row { display: flex; justify-content: flex-end; padding: 6px 0 5px 0; flex: none; }
.goto { width: 65px; height: 29px; }
.conc-chart { margin-left: -5px; width: 466px; height: 310px; flex: none; background: #808080; box-sizing: border-box; font-family: "Liberation Serif", serif; font-size: 15.5px; letter-spacing: 0.3px; color: #222; padding-left: 8px; }
.chart-title { height: 30px; line-height: 28px; text-align: center; padding-right: 8px; letter-spacing: 0.6px; }
.chart-main { display: flex; }
.chart-col { flex: none; padding-top: 1px; }
.labels { width: 64px; }
.values { padding-left: 1px; letter-spacing: 0.6px; }
.chart-row { height: 24px; line-height: 24px; white-space: nowrap; display: flex; align-items: center; }
.plot-wrap { width: 324px; flex: none; }
.plot { height: 242px; box-sizing: border-box; border: 1.5px solid #222; }
.bar { display: block; height: 19.5px; background: #ff0000; }
.axis { display: flex; justify-content: space-between; }
.axis-tick { width: 0; height: 7px; border-left: 1.5px solid #222; position: relative; }
.axis-tick b { position: absolute; left: -20px; width: 40px; top: 8px; text-align: center; font-weight: 400; font-size: 16.5px; }
.conc-right { position: relative; margin-top: 21px; width: 383px; height: 569px; box-sizing: border-box; border: 1.5px solid #c6d8ef; display: flex; flex-direction: column; padding-left: 9px; }
.loc-legend { left: 9px; top: -11px; background: #f8f8f8; width: 74px; height: 22px; box-sizing: border-box; line-height: 21px; padding: 0 4px; color: #222; letter-spacing: -0.4px; }
.del-row { display: flex; justify-content: flex-end; padding: 15px 6px 0 0; height: 63px; box-sizing: border-box; flex: none; }
.delete { width: 107px; height: 29px; }
.table { width: 364px; flex: none; height: 502px; background: #f8f8f8; display: flex; flex-direction: column; justify-content: space-between; }
.t-grid { display: grid; grid-template-columns: 29px 86px 68px 68px 64px 49px; grid-template-rows: 31px 29px; overflow: hidden; }
.t-corner { background: #f0f0f0; border-right: 2px solid #aaa; border-bottom: 2px solid #888; box-sizing: border-box; }
.t-head { background: #f0f0f0; border-right: 2px solid #bbb; border-bottom: 2px solid #aaa; box-sizing: border-box; font: 700 14.3px/30px "DejaVu Sans", sans-serif; color: #111; padding-left: 6px; white-space: nowrap; overflow: hidden; }
.t-green { background: #00ee00; border-left: 1px solid #888; border-right: 1px solid #ddd; box-sizing: border-box; }
.t-cell { font: 16.5px/28px "Liberation Serif", serif; color: #222; padding-left: 5px; border-right: 1.5px solid #e4e4e4; border-bottom: 1.5px solid #e4e4e4; box-sizing: border-box; }
.t-cell.first { border-right: 2px solid #222; }
.loc-scroll { height: 24px; padding-left: 7px; }
.loc-thumb { width: 70px; height: 22px; margin-left: 8px; }
.chev.right { margin-left: auto; margin-right: 9px; }
</style>

<style>
html, body { margin: 0; background: #fff; }
</style>
